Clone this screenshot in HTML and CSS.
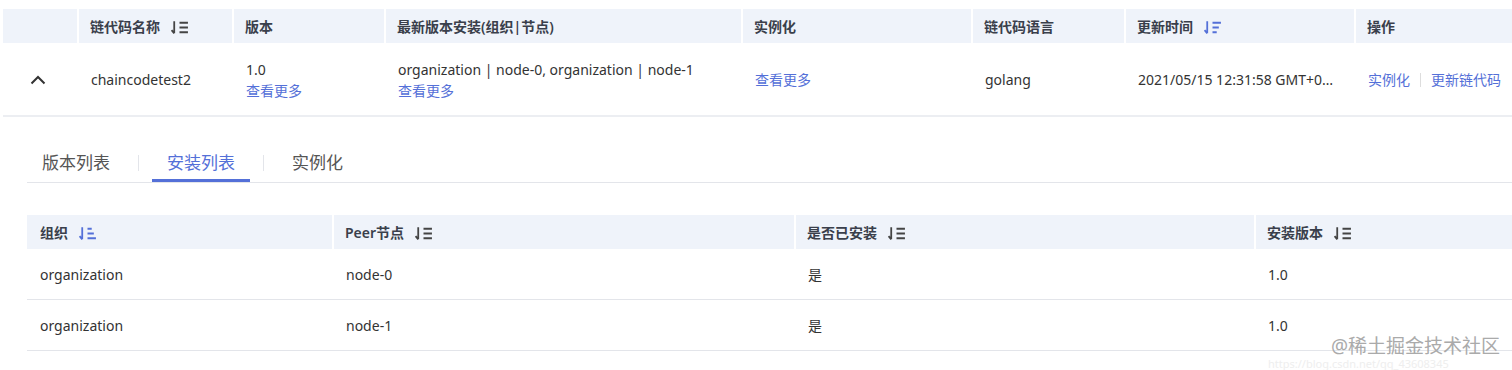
FILE: index.html
```html
<!DOCTYPE html>
<html>

<head>
  <meta charset="utf-8">
  <title>链代码管理</title>
  <link rel="stylesheet" href="styles.css">
</head>

<body>
  <table class="grid main">
    <colgroup>
      <col style="width: 75px">
      <col style="width: 155px">
      <col style="width: 152px">
      <col style="width: 357px">
      <col style="width: 230px">
      <col style="width: 153px">
      <col style="width: 230px">
      <col style="width: 157px">
    </colgroup>
    <tr class="head">
      <th class="first"></th>
      <th>链代码名称 <svg class="sort" viewBox="0 0 18 14"><path d="M4 1v11.5M1.5 9.5L4 12.5M9 2.5h8M9 7h8M9 11.5h8"/></svg></th>
      <th>版本</th>
      <th>最新版本安装(组织|节点)</th>
      <th>实例化</th>
      <th>链代码语言</th>
      <th>更新时间 <svg class="sort on" viewBox="0 0 18 14"><path d="M4 1v11.5M1.5 9.5L4 12.5M9 2.5h8M9 7h6M9 11.5h4"/></svg></th>
      <th>操作</th>
    </tr>
    <tr class="row">
      <td class="first">
        <svg class="chev" viewBox="0 0 16 10"><path d="M1.5 8.5L8 2l6.5 6.5"/></svg>
      </td>
      <td>chaincodetest2</td>
      <td>1.0<br><a href="#">查看更多</a></td>
      <td>organization | node-0, organization | node-1<br><a href="#">查看更多</a></td>
      <td><a href="#">查看更多</a></td>
      <td>golang</td>
      <td class="clip">2021/05/15 12:31:58 GMT+08:00</td>
      <td class="ops"><a href="#">实例化</a><span class="bar"></span><a href="#">更新链代码</a></td>
    </tr>
  </table>

  <div class="detail">
    <div class="tabs">
      <div class="tab">版本列表</div>
      <span class="sep"></span>
      <div class="tab active">安装列表</div>
      <span class="sep"></span>
      <div class="tab">实例化</div>
    </div>

    <table class="grid sub">
      <colgroup>
        <col style="width: 306px">
        <col style="width: 462px">
        <col style="width: 460px">
        <col style="width: 257px">
      </colgroup>
      <tr class="head">
        <th class="first">组织 <svg class="sort on" viewBox="0 0 18 14"><path d="M4 1v11.5M1.5 9.5L4 12.5M9 2.5h4M9 7h6M9 11.5h8"/></svg></th>
        <th>Peer节点 <svg class="sort" viewBox="0 0 18 14"><path d="M4 1v11.5M1.5 9.5L4 12.5M9 2.5h8M9 7h8M9 11.5h8"/></svg></th>
        <th>是否已安装 <svg class="sort" viewBox="0 0 18 14"><path d="M4 1v11.5M1.5 9.5L4 12.5M9 2.5h8M9 7h8M9 11.5h8"/></svg></th>
        <th>安装版本 <svg class="sort" viewBox="0 0 18 14"><path d="M4 1v11.5M1.5 9.5L4 12.5M9 2.5h8M9 7h8M9 11.5h8"/></svg></th>
      </tr>
      <tr class="row">
        <td>organization</td>
        <td>node-0</td>
        <td>是</td>
        <td>1.0</td>
      </tr>
      <tr class="row">
        <td>organization</td>
        <td>node-1</td>
        <td>是</td>
        <td>1.0</td>
      </tr>
    </table>
  </div>

  <div class="mark">
    <span class="logo">@稀土掘金技术社区</span>
    <span class="url">https://blog.csdn.net/qq_43608345</span>
  </div>
</body>

</html>
```

FILE: styles.css
```css
html {
  font-size: 14px;
  font-family: "Noto Sans", "Noto Sans CJK SC", sans-serif;
  color: #333;
}

body {
  margin: 0;
  position: relative;
  height: 370px;
  overflow: hidden;
}

a {
  color: #5470d8;
  text-decoration: none;
}

.grid {
  border-collapse: collapse;
  table-layout: fixed;
}

.main {
  width: 1509px;
  margin: 9px 0 0 3px;
}

.head {
  background-color: #eff3fa;
}

th {
  height: 34px;
  padding: 0 11px;
  border-left: 2px solid #fff;
  text-align: left;
  font-weight: 600;
  color: #3a3f4b;
  white-space: nowrap;
}

th.first {
  border-left: 0;
}

td {
  padding: 0 13px;
  line-height: 21px;
  white-space: nowrap;
}

.main .row td {
  height: 71px;
  padding-top: 1px;
  border-bottom: 2px solid #eceef2;
}

.main td.first {
  padding-left: 27px;
}

.chev {
  width: 16px;
  height: 10px;
  display: block;
  fill: none;
  stroke: #333;
  stroke-width: 2;
}

.clip {
  overflow: hidden;
  text-overflow: ellipsis;
  padding-right: 16px;
}

.ops .bar {
  display: inline-block;
  width: 1px;
  height: 14px;
  background-color: #ddd;
  margin: 0 10px;
  vertical-align: -2px;
}

.sort {
  width: 19px;
  height: 15px;
  margin-left: 6px;
  vertical-align: -3px;
  fill: none;
  stroke: #444;
  stroke-width: 1.7;
}

.sort.on {
  stroke: #5470d8;
}

.detail {
  padding-left: 27px;
}

.tabs {
  display: flex;
  align-items: center;
  margin-top: 28px;
  border-bottom: 1px solid #e3e5ea;
}

.tab {
  padding: 0 15px;
  height: 34px;
  line-height: 36px;
  font-size: 17px;
  color: #555;
  border-bottom: 3px solid transparent;
}

.tab.active {
  color: #5470d8;
  border-bottom-color: #5470d8;
}

.sep {
  width: 1px;
  height: 16px;
  background-color: #e3e5ea;
  margin: 0 13px 2px 13px;
}

.sub {
  width: 1485px;
  margin-top: 32px;
}

.sub th {
  padding: 0 11px;
}

.sub th.first {
  padding-left: 13px;
}

.sub td {
  height: 50px;
  border-bottom: 1px solid #e3e5ea;
}

.mark {
  position: absolute;
  left: 1268px;
  top: 334px;
  width: 240px;
  height: 36px;
}

.mark .logo {
  position: absolute;
  right: 8px;
  top: 0;
  font-size: 19px;
  line-height: 24px;
  color: #aaa;
  white-space: nowrap;
}

.mark .url {
  position: absolute;
  left: 0;
  top: 24px;
  font-size: 11px;
  line-height: 12px;
  color: #eee;
  white-space: nowrap;
}
```
